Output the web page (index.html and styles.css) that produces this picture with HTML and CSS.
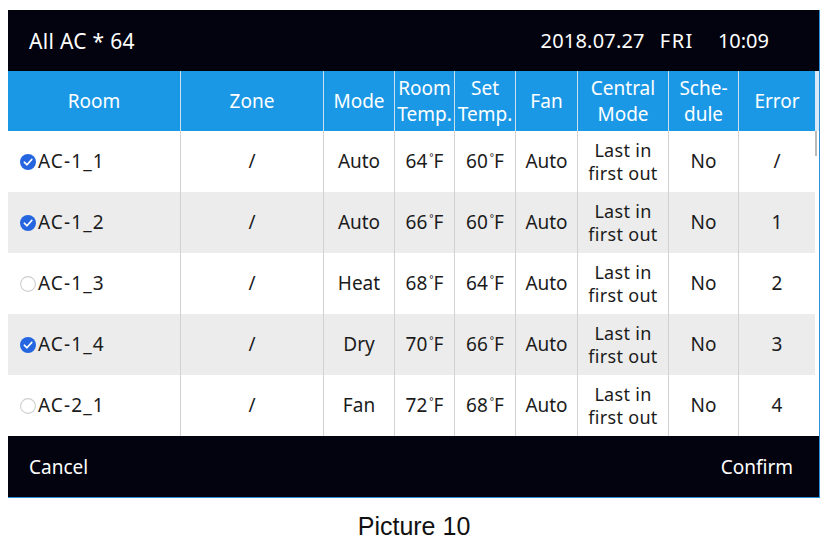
FILE: index.html
```html
<!DOCTYPE html>
<html>
<head>
<meta charset="utf-8">
<link rel="stylesheet" href="styles.css">
</head>
<body>
<div class="panel">
  <div class="topbar">
    <div class="title">All AC * 64</div>
    <div class="clock"><span class="date">2018.07.27</span><span class="day">FRI</span><span>10:09</span></div>
  </div>
  <div class="tablewrap">
    <div class="table">
      <div class="row head">
        <div class="cell">Room</div>
        <div class="cell">Zone</div>
        <div class="cell">Mode</div>
        <div class="cell two">Room<br>Temp.</div>
        <div class="cell two">Set<br>Temp.</div>
        <div class="cell">Fan</div>
        <div class="cell two">Central<br>Mode</div>
        <div class="cell two">Sche-<br>dule</div>
        <div class="cell">Error</div>
      </div>
      <div class="row">
        <div class="cell room"><span class="chk on"><svg viewBox="0 0 16 16"><circle cx="8" cy="8" r="8" fill="#2566e0"/><path d="M4.3 8.2 L7 10.8 L11.8 5.4" fill="none" stroke="#fff" stroke-width="1.6" stroke-linecap="round" stroke-linejoin="round"/></svg></span>AC-1_1</div>
        <div class="cell">/</div>
        <div class="cell">Auto</div>
        <div class="cell">64<span class="deg">°</span>F</div>
        <div class="cell">60<span class="deg">°</span>F</div>
        <div class="cell">Auto</div>
        <div class="cell two">Last in<br>first out</div>
        <div class="cell">No</div>
        <div class="cell">/</div>
      </div>
      <div class="row alt">
        <div class="cell room"><span class="chk on"><svg viewBox="0 0 16 16"><circle cx="8" cy="8" r="8" fill="#2566e0"/><path d="M4.3 8.2 L7 10.8 L11.8 5.4" fill="none" stroke="#fff" stroke-width="1.6" stroke-linecap="round" stroke-linejoin="round"/></svg></span>AC-1_2</div>
        <div class="cell">/</div>
        <div class="cell">Auto</div>
        <div class="cell">66<span class="deg">°</span>F</div>
        <div class="cell">60<span class="deg">°</span>F</div>
        <div class="cell">Auto</div>
        <div class="cell two">Last in<br>first out</div>
        <div class="cell">No</div>
        <div class="cell">1</div>
      </div>
      <div class="row">
        <div class="cell room"><span class="chk"><svg viewBox="0 0 16 16"><circle cx="8" cy="8" r="7.4" fill="#fff" stroke="#cfcfcf" stroke-width="1.1"/></svg></span>AC-1_3</div>
        <div class="cell">/</div>
        <div class="cell">Heat</div>
        <div class="cell">68<span class="deg">°</span>F</div>
        <div class="cell">64<span class="deg">°</span>F</div>
        <div class="cell">Auto</div>
        <div class="cell two">Last in<br>first out</div>
        <div class="cell">No</div>
        <div class="cell">2</div>
      </div>
      <div class="row alt">
        <div class="cell room"><span class="chk on"><svg viewBox="0 0 16 16"><circle cx="8" cy="8" r="8" fill="#2566e0"/><path d="M4.3 8.2 L7 10.8 L11.8 5.4" fill="none" stroke="#fff" stroke-width="1.6" stroke-linecap="round" stroke-linejoin="round"/></svg></span>AC-1_4</div>
        <div class="cell">/</div>
        <div class="cell">Dry</div>
        <div class="cell">70<span class="deg">°</span>F</div>
        <div class="cell">66<span class="deg">°</span>F</div>
        <div class="cell">Auto</div>
        <div class="cell two">Last in<br>first out</div>
        <div class="cell">No</div>
        <div class="cell">3</div>
      </div>
      <div class="row">
        <div class="cell room"><span class="chk"><svg viewBox="0 0 16 16"><circle cx="8" cy="8" r="7.4" fill="#fff" stroke="#cfcfcf" stroke-width="1.1"/></svg></span>AC-2_1</div>
        <div class="cell">/</div>
        <div class="cell">Fan</div>
        <div class="cell">72<span class="deg">°</span>F</div>
        <div class="cell">68<span class="deg">°</span>F</div>
        <div class="cell">Auto</div>
        <div class="cell two">Last in<br>first out</div>
        <div class="cell">No</div>
        <div class="cell">4</div>
      </div>
    </div>
    <div class="gutter"><div class="gutter-head"></div><div class="thumb"></div></div>
  </div>
  <div class="footer">
    <div class="btn">Cancel</div>
    <div class="btn">Confirm</div>
  </div>
</div>
<div class="caption">Picture 10</div>
</body>
</html>
```

FILE: styles.css
```css
html, body {
  margin: 0;
  padding: 0;
  background: #ffffff;
}
body {
  font-family: "Noto Sans", "Lato", sans-serif;
}
.panel {
  margin: 10px 0 0 8px;
  width: 811px;
  border-right: 1px solid #2d8fd5;
  border-bottom: 1px solid #2d8fd5;
}
.topbar {
  height: 61px;
  background: #03030f;
  color: #ffffff;
  display: flex;
  align-items: center;
  justify-content: space-between;
  padding: 0 50px 0 21px;
  font-size: 21px;
}
.title {
  letter-spacing: 0.3px;
}
.clock {
  display: flex;
  font-size: 20px;
}
.clock .date { margin-right: 15px; letter-spacing: 0.2px; }
.clock .day { margin-right: 24px; letter-spacing: 1.5px; }
.tablewrap {
  display: flex;
}
.table {
  width: 807px;
}
.row {
  display: grid;
  grid-template-columns: 172px 143px 71px 60px 61px 62px 91px 70px 77px;
  height: 61px;
  background: #ffffff;
  color: #1b1b1b;
  font-size: 19px;
}
.row.alt {
  background: #ececec;
}
.row.head {
  height: 60px;
  background: #1b98e5;
  color: #ffffff;
}
.cell {
  display: flex;
  align-items: center;
  justify-content: center;
  text-align: center;
  border-left: 1px solid #d2d2d2;
  line-height: 23px;
  white-space: nowrap;
}
.row .cell.two {
  font-size: 18px;
  letter-spacing: 0.3px;
}
.row.head .cell {
  border-left-color: #c9e0ef;
  line-height: 26px;
}
.row.head .cell.two {
  font-size: 19px;
  letter-spacing: 0;
}
.cell:first-child {
  border-left: none;
}
.cell.room {
  justify-content: flex-start;
  padding-left: 12px;
  letter-spacing: 1.1px;
}
.row.head .cell:first-child {
  justify-content: center;
  padding-left: 0;
  letter-spacing: 0;
}
.chk {
  width: 16px;
  height: 16px;
  margin-right: 2px;
  display: inline-flex;
}
.chk svg {
  width: 16px;
  height: 16px;
}
.deg {
  font-size: 10px;
  line-height: 10px;
  align-self: flex-start;
  margin-top: 21px;
  margin-left: 2px;
  margin-right: 0;
}
.gutter {
  width: 4px;
  background: #ffffff;
  position: relative;
}
.gutter-head {
  height: 60px;
  background: #d8eaf7;
}
.thumb {
  position: absolute;
  left: 0;
  top: 60px;
  width: 2px;
  height: 25px;
  background: #b9b9b9;
}
.footer {
  height: 61px;
  background: #03030f;
  color: #ffffff;
  display: flex;
  align-items: center;
  justify-content: space-between;
  padding: 0 26px 0 21px;
  font-size: 19px;
}
.caption {
  width: 828px;
  text-align: center;
  font-family: "Liberation Sans", Arial, sans-serif;
  font-size: 25px;
  color: #111111;
  margin-top: 14px;
}
```
